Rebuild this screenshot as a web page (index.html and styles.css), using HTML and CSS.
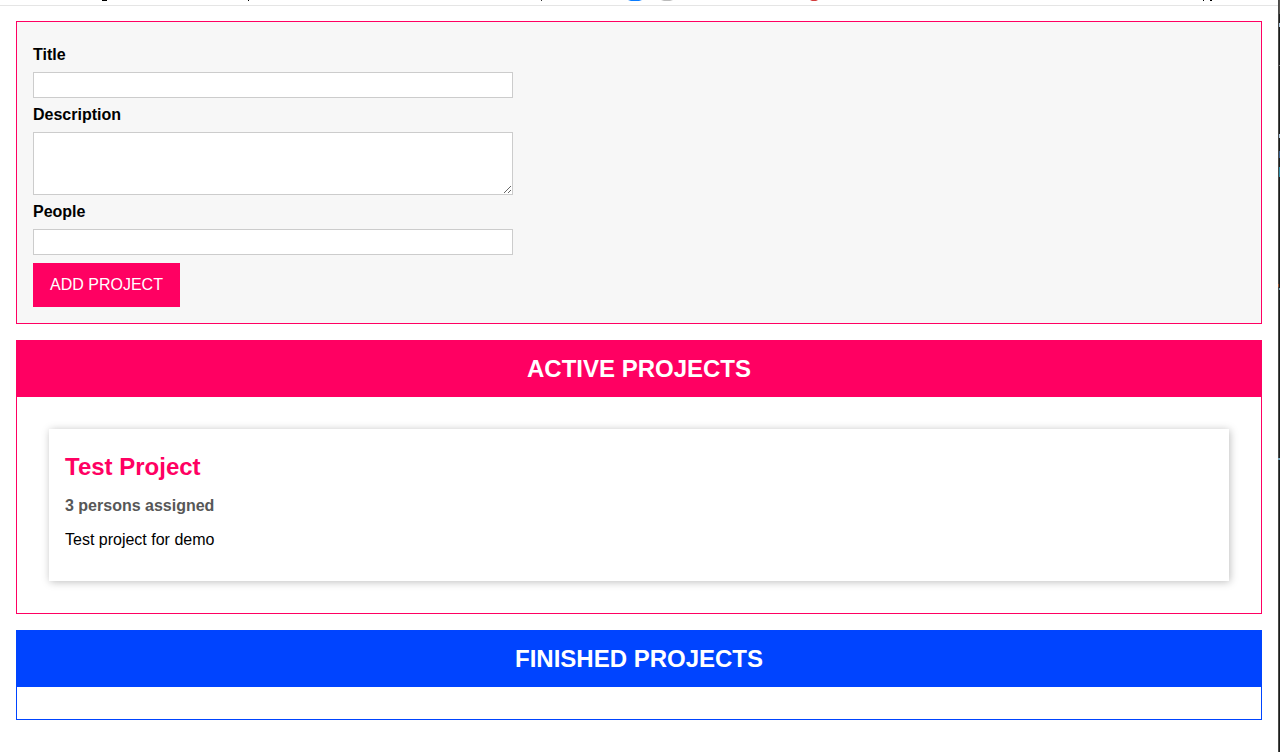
FILE: index.html
```html
<!DOCTYPE html>
<html lang="en">
<head>
<meta charset="utf-8">
<title>Projects</title>
<link rel="stylesheet" href="styles.css">
</head>
<body>
<div class="page">
  <div class="toolbar" aria-hidden="true">
    <svg class="toolbar-marks" width="1278" height="2">
      <path d="M102 0h5v1h-5zM248 0h1v1h-1zM1203 0h1v1h-1zM1210 0h2v1h-2z" fill="#000"/>
      <path d="M541 0h1v1h-1z" fill="#333"/>
      <path d="M628 0h14l-3 1h-8z" fill="#0a7cff"/>
      <path d="M661 0h12l-3 1h-6z" fill="#bbb"/>
      <path d="M810 0h8l-2 1h-4z" fill="#d33c3c"/>
    </svg>
  </div>
  <main class="app">
    <form class="panel user-input">
      <div class="form-control">
        <label for="title">Title</label>
        <input type="text" id="title">
      </div>
      <div class="form-control">
        <label for="description">Description</label>
        <textarea id="description" rows="3"></textarea>
      </div>
      <div class="form-control">
        <label for="people">People</label>
        <input type="text" id="people">
      </div>
      <button type="button">ADD PROJECT</button>
    </form>
    <section class="panel projects">
      <header><h2>ACTIVE PROJECTS</h2></header>
      <ul>
        <li>
          <h2>Test Project</h2>
          <h3>3 persons assigned</h3>
          <p>Test project for demo</p>
        </li>
      </ul>
    </section>
    <section class="panel projects finished">
      <header><h2>FINISHED PROJECTS</h2></header>
      <ul></ul>
    </section>
  </main>
</div>
<div class="window-edge" aria-hidden="true">
  <svg class="edge-marks" width="2" height="470">
    <path d="M1 0h1v14h-1z" fill="#55534f"/>
    <path d="M1 23h1v4h-1zM1 134h1v4h-1z" fill="#a9c4dc"/>
    <path d="M1 65h1v1h-1z" fill="#777"/>
    <path d="M1 151h1v7h-1z" fill="#3a6190"/>
    <path d="M1 167h1v10h-1z" fill="#3292ae"/>
    <path d="M0 284h1v3h-1z" fill="#a0522d"/>
    <path d="M1 288h1v2h-1zM0 458h2v2h-2z" fill="#78a5ba"/>
  </svg>
</div>
</body>
</html>
```
FILE: styles.css
```css
* {
  box-sizing: border-box;
}

body {
  display: flex;
  min-height: 100vh;
  margin: 0;
  background: #fff;
  color: #000;
  font: 16px/18px "Liberation Sans", Arial, sans-serif;
}

h2,
h3,
p,
ul {
  margin: 0;
  padding: 0;
}

.page {
  flex: 1;
  min-width: 0;
}

.window-edge {
  width: 2px;
  background: linear-gradient(90deg, #4a4a48 50%, #1c1e1e 50%);
}

.toolbar {
  height: 6px;
  overflow: hidden;
  border-bottom: 1px solid #e5e5e5;
}

.toolbar-marks,
.edge-marks {
  display: block;
}

.app {
  display: flex;
  flex-direction: column;
  gap: 16px;
  padding: 15px 16px 32px;
}

.panel {
  border: 1px solid #ff0062;
}

.user-input {
  display: flex;
  flex-direction: column;
  align-items: flex-start;
  gap: 8px;
  padding: 24px 16px 16px;
  background: #f7f7f7;
}

.form-control {
  display: flex;
  flex-direction: column;
  gap: 8px;
  width: 100%;
  max-width: 480px;
}

label {
  font-weight: bold;
}

input,
textarea {
  display: block;
  width: 100%;
  margin: 0;
  padding: 3px;
  border: 1px solid #ccc;
  border-radius: 0;
  background: #fff;
  font: inherit;
}

textarea {
  height: 63px;
  resize: vertical;
}

button {
  padding: 13px 17px;
  border: 0;
  background: #ff0062;
  color: #fff;
  font: inherit;
  cursor: pointer;
}

.projects header {
  display: flex;
  align-items: center;
  justify-content: center;
  height: 56px;
  background: #ff0062;
  color: #fff;
}

.projects h2 {
  font-size: 24px;
  line-height: 28px;
}

.projects ul {
  padding: 32px 32px 0;
  list-style: none;
}

.projects li {
  display: flex;
  flex-direction: column;
  gap: 16px;
  margin-bottom: 32px;
  padding: 24px 16px 32px;
  background: #fff;
  box-shadow: 1px 1px 8px rgba(0, 0, 0, 0.26);
}

.projects li h2 {
  color: #ff0062;
}

.projects h3 {
  color: #575757;
  font-size: 16px;
}

.finished {
  border-color: #0044ff;
}

.finished header {
  background: #0044ff;
}
```
